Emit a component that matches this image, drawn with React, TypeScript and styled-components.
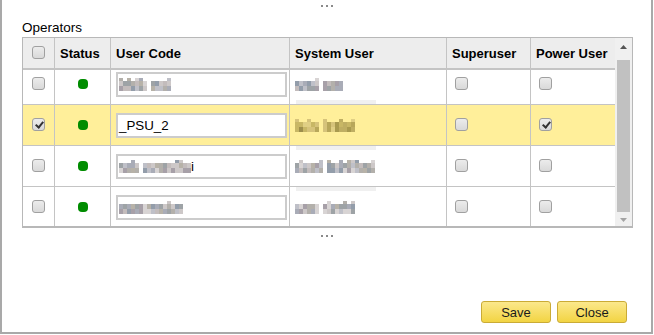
import React, { useLayoutEffect, useRef } from 'react';
import styled, { createGlobalStyle } from 'styled-components';

type Band = 'top' | 'bottom';

type Operator = {
  id: number;
  code?: string;
  codeWords?: number[];
  codeTail?: string;
  userWords: number[];
  selected: boolean;
  superuser: boolean;
  power: boolean;
  band?: Band;
};

const operators: Operator[] = [
  { id: 1, codeWords: [7, 5], userWords: [6, 5], selected: false, superuser: false, power: false, band: 'bottom' },
  { id: 2, code: '_PSU_2', userWords: [6, 8], selected: true, superuser: false, power: true },
  { id: 3, codeWords: [5, 12], codeTail: 'i', userWords: [7, 12], selected: false, superuser: false, power: false, band: 'top' },
  { id: 4, codeWords: [16], userWords: [6, 8], selected: false, superuser: false, power: false, band: 'top' },
];

const GRAY = ['#a9acb7', '#c3bcbc', '#bfc0c8', '#9ea3a6', '#d8d4d4', '#b7b2a8', '#939daa', '#cdc8c8', '#a7a0a8', '#b3b0ab'];
const KHAKI = ['#c8b765', '#a99a4f', '#b8a75a', '#d6c37a', '#9d8e4c', '#e0cf84', '#bfae62'];

// redacted (pixelated) text, drawn as blocks
function Mosaic({ words, seed, khaki }: { words: number[]; seed: number; khaki?: boolean }) {
  let s = seed * 7919;
  const next = () => {
    s = (s * 9301 + 49297) % 233280;
    return s / 233280;
  };
  const palette = khaki ? KHAKI : GRAY;
  return (
    <Blur>
      {words.map((n, w) => (
        <Word key={w}>
          {Array.from({ length: n * 3 }, (_, i) => {
            // first block of each column is the sparse ascender row
            const top = i % 3 === 0;
            const color = top && next() > 0.2 ? 'transparent' : palette[Math.floor(next() * palette.length)];
            return <Block key={i} style={{ background: color }} />;
          })}
        </Word>
      ))}
    </Blur>
  );
}

export default function App() {
  const viewport = useRef<HTMLDivElement>(null);

  useLayoutEffect(() => {
    if (viewport.current) viewport.current.scrollTop = 6;
  }, []);

  return (
    <>
      <GlobalStyle />
      <Dialog>
        <Dots>
          <i /><i /><i />
        </Dots>

        <Label>Operators</Label>

        <Grid>
          <TableArea>
            <HeaderRow>
              <Cell $center><Check /></Cell>
              <HeadCell>Status</HeadCell>
              <HeadCell>User Code</HeadCell>
              <HeadCell>System User</HeadCell>
              <HeadCell>Superuser</HeadCell>
              <HeadCell>Power User</HeadCell>
            </HeaderRow>

            <Viewport ref={viewport}>
              {operators.map((op) => (
                <Row key={op.id} $selected={op.selected}>
                  <Cell $center><Check defaultChecked={op.selected} /></Cell>
                  <Cell $center><StatusDot /></Cell>
                  <Cell>
                    <Field>
                      {op.code ?? <Mosaic words={op.codeWords ?? []} seed={op.id * 3 + 1} />}
                      {op.codeTail}
                    </Field>
                  </Cell>
                  <Cell $band={op.band}>
                    <Mosaic words={op.userWords} seed={op.id * 5 + 2} khaki={op.selected} />
                  </Cell>
                  <Cell $pad={8}><Check /></Cell>
                  <Cell $pad={8}><Check defaultChecked={op.power} /></Cell>
                </Row>
              ))}
            </Viewport>
          </TableArea>

          <ScrollBar>
            <ArrowBox $top={7} $height={22}>
              <svg width="7" height="4" viewBox="0 0 7 4">
                <polygon points="0,4 3.5,0 7,4" fill="#555" />
              </svg>
            </ArrowBox>
            <Thumb />
            <ArrowBox $top={6} $height={14}>
              <svg width="7" height="4" viewBox="0 0 7 4">
                <polygon points="0,0 7,0 3.5,4" fill="#a3a3a3" />
              </svg>
            </ArrowBox>
          </ScrollBar>
        </Grid>

        <Dots $bottom>
          <i /><i /><i />
        </Dots>

        <ButtonBar>
          <Button>Save</Button>
          <Button>Close</Button>
        </ButtonBar>
      </Dialog>
    </>
  );
}

const GlobalStyle = createGlobalStyle`
  html, body {
    margin: 0;
    padding: 0;
    background: #fff;
  }

  body {
    font-family: 'Liberation Sans', Arial, sans-serif;
    font-size: 13px;
    color: #000;
  }

  * {
    box-sizing: border-box;
  }
`;

const Dialog = styled.div`
  display: flex;
  flex-direction: column;

  width: 653px;
  height: 334px;

  border: 2px solid #a9a9a9;
  border-top: none;
`;

const Dots = styled.div<{ $bottom?: boolean }>`
  display: flex;
  justify-content: center;
  gap: 3px;

  height: 2px;
  margin-top: ${(p) => (p.$bottom ? '7px' : '5px')};

  i {
    width: 2px;
    height: 2px;
    background: #8a8a8a;
  }
`;

const Label = styled.div`
  margin: 13px 0 1px 20px;

  font-size: 13.5px;
  line-height: 16px;
`;

const Grid = styled.div`
  display: flex;

  width: 611px;
  margin-left: 20px;

  border: 1px solid #b8b8b8;
  border-bottom-width: 2px;
`;

const TableArea = styled.div`
  display: flex;
  flex-direction: column;

  width: 592px;
`;

const columns = '32px 56px 179px 157px 84px 84px';

const HeaderRow = styled.div`
  display: grid;
  grid-template-columns: ${columns};

  height: 32px;

  background: #ededed;
  border-bottom: 2px solid #c4c4c4;
`;

const Viewport = styled.div`
  height: 156px;
  overflow: hidden;
`;

const Row = styled.div<{ $selected?: boolean }>`
  display: grid;
  grid-template-columns: ${columns};

  height: 41px;

  background: ${(p) => (p.$selected ? '#ffef9a' : '#fff')};
  border-bottom: 1px solid #c4c4c4;
`;

const Cell = styled.div<{ $center?: boolean; $pad?: number; $band?: Band }>`
  display: flex;
  align-items: center;
  justify-content: ${(p) => (p.$center ? 'center' : 'flex-start')};

  padding-left: ${(p) => (p.$center ? 0 : p.$pad ?? 5)}px;

  border-right: 1px solid #c4c4c4;

  background: ${(p) =>
    p.$band ? `linear-gradient(#f0f0f0, #f0f0f0) no-repeat 6px ${p.$band} / 80px 4px` : 'none'};

  &:last-child {
    border-right: none;
  }
`;

const HeadCell = styled(Cell)`
  font-weight: bold;
  font-size: 13px;
`;

const Check = styled.input.attrs({ type: 'checkbox' })`
  position: relative;
  appearance: none;

  width: 13px;
  height: 13px;
  margin: 0 0 2px;

  border: 1px solid #a0a0a0;
  border-radius: 3px;
  background: linear-gradient(#ececec, #d9d9d9);

  &:checked::after {
    content: '';
    position: absolute;
    left: 4px;
    top: 1px;

    width: 3px;
    height: 6px;

    border: solid #333;
    border-width: 0 2px 2px 0;
    transform: rotate(40deg);
  }
`;

const StatusDot = styled.span`
  width: 10px;
  height: 10px;

  border-radius: 4px;
  background: #008c00;
`;

const Field = styled.div`
  display: flex;
  align-items: center;

  width: 171px;
  height: 25px;
  padding: 0 1px;

  border: 2px solid #cccccc;
  background: #fff;

  font-size: 13.33px;
`;

const Blur = styled.span`
  display: inline-flex;
  align-items: center;
  gap: 4px;
`;

const Word = styled.span`
  display: grid;
  grid-template-rows: 3px 5px 5px;
  grid-auto-flow: column;
  grid-auto-columns: 4px;
`;

const Block = styled.span`
  display: block;
`;

const ScrollBar = styled.div`
  display: flex;
  flex-direction: column;

  width: 17px;

  background: #f0f0f0;
`;

const ArrowBox = styled.div<{ $top: number; $height: number }>`
  display: flex;
  justify-content: center;
  align-items: flex-start;

  height: ${(p) => p.$height}px;
  padding-top: ${(p) => p.$top}px;

  svg {
    display: block;
  }
`;

const Thumb = styled.div`
  flex: 1;

  margin: 0 2px;

  background: #c1c1c1;
`;

const ButtonBar = styled.div`
  display: flex;
  justify-content: flex-end;
  gap: 6px;

  margin-top: auto;
  padding: 0 24px 9px 0;
`;

const Button = styled.button`
  width: 70px;
  height: 22px;
  padding: 0;

  border: 1px solid #caab36;
  border-radius: 3px;
  background: linear-gradient(#fbe88c, #f2d443);

  font-family: 'Liberation Sans', Arial, sans-serif;
  font-size: 13px;
  color: #1a1a1a;

  cursor: pointer;
`;
